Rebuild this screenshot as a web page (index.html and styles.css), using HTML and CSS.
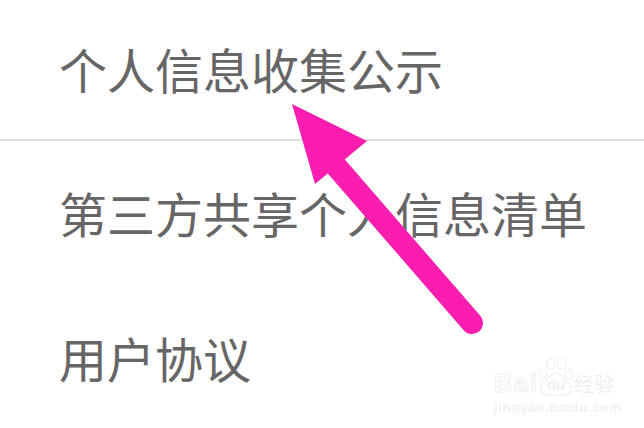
FILE: index.html
```html
<!DOCTYPE html>
<html lang="zh-CN">
<head>
  <meta charset="UTF-8">
  <meta name="viewport" content="width=device-width, initial-scale=1">
  <title>个人信息收集公示</title>
  <link rel="stylesheet" href="styles.css">
</head>

<body>

  <div class="list">
    <div class="row row-first">个人信息收集公示</div>
    <div class="row">第三方共享个人信息清单</div>
    <div class="row">用户协议</div>
  </div>

  <!-- annotation arrow drawn over the list -->
  <svg class="arrow" width="644" height="428" viewBox="0 0 644 428">
    <line x1="472" y1="323" x2="335" y2="165" stroke="#fb1cb0" stroke-width="22" stroke-linecap="round"/>
    <polygon points="292,104 367,141 315,184" fill="#fb1cb0"/>
  </svg>

  <div class="watermark">
    <div class="wm-top">
      <span class="wm-bai">Bai</span>
      <div class="wm-logo">
        <svg class="wm-paw" width="36" height="38" viewBox="0 0 36 38">
          <ellipse cx="5" cy="15" rx="3.5" ry="5" />
          <ellipse cx="13" cy="6" rx="4" ry="5.5" />
          <ellipse cx="24" cy="6" rx="4" ry="5.5" />
          <ellipse cx="31" cy="16" rx="3.5" ry="5" />
          <path d="M18 15 C12 15 11 21 6 25 C1 29 2 37 10 37 L26 37 C34 37 35 29 30 25 C25 21 24 15 18 15 Z"/>
        </svg>
        <span class="wm-du">du</span>
      </div>
      <span class="wm-jy">经验</span>
    </div>
    <div class="wm-url">jingyan.baidu.com</div>
  </div>

</body>
</html>
```

FILE: styles.css
```css
* { margin: 0; padding: 0; box-sizing: border-box; }

body {
  width: 644px;
  height: 428px;
  background: #fff;
  overflow: hidden;
  position: relative;
  font-family: 'Noto Sans CJK SC', 'Liberation Sans', sans-serif;
}

.list {
  display: flex;
  flex-direction: column;
}

.row {
  height: 145px;
  padding-left: 59px;
  padding-bottom: 4px;
  display: flex;
  align-items: center;
  font-size: 48px;
  line-height: 1;
  color: #666;
}

.row-first {
  height: 141px;
  border-bottom: 2px solid #e0e0e0;
}

.arrow {
  position: absolute;
  top: 0;
  left: 0;
}

.watermark {
  position: absolute;
  left: 494px;
  top: 358px;
  color: #fff;
  font-family: 'Liberation Sans', 'Noto Sans CJK SC', sans-serif;
}

.wm-top {
  display: flex;
  align-items: flex-end;
  height: 38px;
  line-height: 1;
}

.wm-bai {
  font-size: 25px;
  font-weight: bold;
  letter-spacing: 2px;
  -webkit-text-stroke: 1px #efefef;
}

.wm-logo {
  position: relative;
  width: 36px;
  height: 38px;
  margin-left: -1px;
}

.wm-paw {
  fill: #fff;
  stroke: #efefef;
  stroke-width: 1.2;
}

.wm-du {
  position: absolute;
  left: 9px;
  bottom: 4px;
  font-size: 15px;
  font-weight: bold;
  color: #efefef;
}

.wm-jy {
  font-size: 20px;
  margin-bottom: 1px;
  color: #efefef;
}

.wm-url {
  font-size: 13.5px;
  font-weight: bold;
  margin-top: 4px;
  letter-spacing: 0.55px;
  color: #f1f1f1;
}
```
